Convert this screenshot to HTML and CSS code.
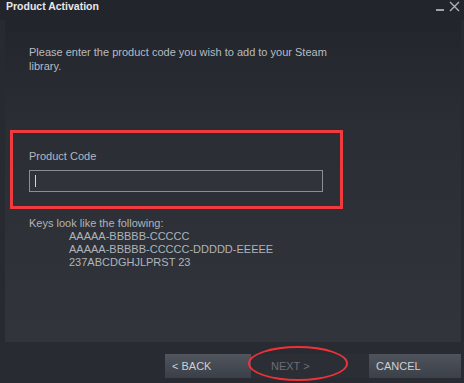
FILE: index.html
```html
<!DOCTYPE html>
<html>
<head>
<meta charset="utf-8">
<link rel="stylesheet" href="styles.css">
</head>
<body>
<div class="window">
  <div class="titlebar">
    <span class="title">Product Activation</span>
    <div class="controls">
      <svg class="min" width="9" height="12" viewBox="0 0 9 12"><rect x="0" y="8" width="8" height="2" fill="#9ea2a8"/></svg>
      <svg class="close" width="11" height="11" viewBox="0 0 11 11"><path d="M1 1 L10 10 M10 1 L1 10" stroke="#aeb2b8" stroke-width="1.4"/></svg>
    </div>
  </div>
  <div class="panel">
    <p class="intro">Please enter the product code you wish to add to your Steam<br>library.</p>
    <div class="highlight">
      <div class="label">Product Code</div>
      <div class="input"><span class="caret"></span></div>
    </div>
    <div class="keys">
      <div>Keys look like the following:</div>
      <div class="ex">AAAAA-BBBBB-CCCCC</div>
      <div class="ex">AAAAA-BBBBB-CCCCC-DDDDD-EEEEE</div>
      <div class="ex">237ABCDGHJLPRST 23</div>
    </div>
  </div>
  <div class="footer">
    <div class="btn back">&lt; BACK</div>
    <div class="btn next">NEXT &gt;</div>
    <div class="btn cancel">CANCEL</div>
    <div class="ring"></div>
  </div>
</div>
</body>
</html>
```
FILE: styles.css
```css
html, body {
  margin: 0;
  padding: 0;
  width: 464px;
  height: 383px;
  overflow: hidden;
  background: #272a30;
  font-family: "Liberation Sans", Arial, sans-serif;
}
.window {
  width: 464px;
  height: 383px;
  display: flex;
  flex-direction: column;
  background: #272a30;
  position: relative;
}
.titlebar {
  height: 20px;
  display: flex;
  justify-content: space-between;
  align-items: flex-start;
  background: #22252b;
}
.title {
  color: #e6e8ea;
  font-weight: bold;
  font-size: 10.5px;
  line-height: 12px;
  padding-left: 6px;
}
.controls {
  display: flex;
  gap: 4px;
  padding-right: 4px;
  padding-top: 1px;
  align-items: flex-start;
}
.panel {
  height: 322px;
  margin: 0 3px 0 5px;
  background: linear-gradient(to bottom, #22252b 0%, #2a2d33 30%, #31343a 100%);
  box-sizing: border-box;
  padding-top: 25px;
}
.intro {
  margin: 0 0 0 24px;
  color: #b8bcc2;
  font-size: 11px;
  line-height: 14px;
}
.highlight {
  margin: 57px 0 0 5px;
  width: 333px;
  height: 79px;
  box-sizing: border-box;
  border: 3px solid #f03a3d;
  padding: 16px 0 0 16px;
}
.label {
  color: #b4b8be;
  font-size: 11px;
  line-height: 14px;
}
.input {
  margin-top: 7px;
  width: 294px;
  height: 22px;
  box-sizing: border-box;
  border: 1px solid #8b8f95;
  background: #30333a;
  position: relative;
}
.caret {
  position: absolute;
  left: 5px;
  top: 4px;
  width: 1px;
  height: 12px;
  background: #d0d3d7;
}
.keys {
  margin: 8px 0 0 24px;
  color: #b0b4ba;
  font-size: 11px;
  line-height: 13px;
}
.ex {
  padding-left: 40px;
}
.footer {
  flex: 1;
  display: flex;
  align-items: flex-start;
  padding-top: 12px;
  padding-left: 165px;
  position: relative;
  background: #282b31;
}
.btn {
  height: 24px;
  box-sizing: border-box;
  font-size: 11px;
  line-height: 24px;
  padding-left: 7px;
  color: #cdd0d5;
}
.back {
  width: 86px;
  background: linear-gradient(to bottom, #50555e, #3b3f47);
}
.next {
  width: 118px;
  color: #6a6e75;
  background: #2b2e34;
  padding-left: 20px;
}
.cancel {
  width: 92px;
  background: linear-gradient(to bottom, #4e535c, #3c4048);
}
.ring {
  position: absolute;
  left: 248px;
  top: 4px;
  width: 100px;
  height: 35px;
  box-sizing: border-box;
  border: 2.5px solid #ee3237;
  border-radius: 50%;
}
```
